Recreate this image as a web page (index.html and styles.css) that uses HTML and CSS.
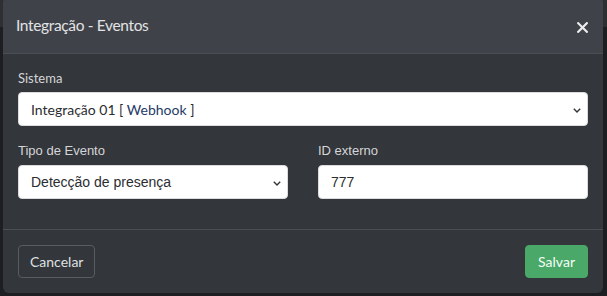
FILE: index.html
```html
<!DOCTYPE html>
<html lang="pt">
<head>
<meta charset="utf-8">
<title>Integração - Eventos</title>
<link rel="stylesheet" href="styles.css">
</head>
<body>
<div class="modal">
  <div class="modal-header">
    <h5 class="modal-title">Integração - Eventos</h5>
    <button class="close" type="button" aria-label="Fechar">
      <svg width="11" height="11" viewBox="0 0 11 11"><path d="M1.2 1.2 L9.8 9.8 M9.8 1.2 L1.2 9.8" stroke="#ececec" stroke-width="2.2" stroke-linecap="square" fill="none"/></svg>
    </button>
  </div>
  <div class="modal-body">
    <div class="form-group">
      <label class="label">Sistema</label>
      <div class="control select nunito">
        <span>Integração 01 [ <span class="tag">Webhook</span> ]</span>
        <svg class="chev" width="8" height="5" viewBox="0 0 8 5"><path d="M0.8 0.8 L4 4 L7.2 0.8" stroke="#333" stroke-width="1.4" fill="none"/></svg>
      </div>
    </div>
    <div class="row">
      <div class="form-group col">
        <label class="label arial">Tipo de Evento</label>
        <div class="control select arial">
          <span>Detecção de presença</span>
          <svg class="chev" width="8" height="5" viewBox="0 0 8 5"><path d="M0.8 0.8 L4 4 L7.2 0.8" stroke="#333" stroke-width="1.4" fill="none"/></svg>
        </div>
      </div>
      <div class="form-group col">
        <label class="label arial">ID externo</label>
        <div class="control arial"><span>777</span></div>
      </div>
    </div>
  </div>
  <div class="modal-footer">
    <button class="btn btn-outline" type="button">Cancelar</button>
    <button class="btn btn-success" type="button">Salvar</button>
  </div>
</div>
</body>
</html>
```
FILE: styles.css
```css
html, body {
  margin: 0;
  padding: 0;
}
body {
  background: linear-gradient(#2d2f33 0 27px, #1d1e21 27px);
  font-family: Lato, "Open Sans", sans-serif;
  height: 296px;
  overflow: hidden;
}
.modal {
  margin: -3px 4px 0 3px;
  width: 600px;
  background: #33363b;
  border-radius: 6px;
  overflow: hidden;
}
.modal-header {
  background: #3f4248;
  display: flex;
  align-items: center;
  justify-content: space-between;
  padding: 16px 16px 16px 13px;
  border-bottom: 1px solid #4b4e54;
}
.modal-title {
  margin: 0;
  font-size: 15.5px;
  letter-spacing: -0.35px;
  font-weight: 400;
  line-height: 24px;
  color: #e2e3e5;
}
.close {
  background: none;
  border: 0;
  padding: 0;
  margin-right: -1px;
  display: flex;
  margin-top: 5px;
}
.modal-body {
  padding: 15px 15px 14px;
}
.form-group {
  margin-bottom: 16px;
  display: flex;
  flex-direction: column;
}
.label {
  font-size: 13px;
  line-height: 18px;
  color: #d4d5d7;
  margin-bottom: 5px;
}
.arial {
  font-family: "Liberation Sans", Arial, sans-serif;
}
.nunito {
  font-family: Lato, sans-serif;
}
.row {
  display: flex;
  gap: 30px;
}
.col {
  flex: 1;
}
.control {
  height: 34px;
  box-sizing: border-box;
  background: #fff;
  border: 1px solid #dcdcdc;
  border-radius: 4px;
  padding: 0 6px 0 12px;
  display: flex;
  align-items: center;
  justify-content: space-between;
  font-size: 14px;
  color: #2b2d30;
}
.tag {
  color: #253a66;
}
.chev {
  margin-top: 2px;
}
.modal-footer {
  border-top: 1px solid #4b4e54;
  padding: 15px;
  display: flex;
  justify-content: space-between;
  align-items: center;
}
.btn {
  height: 33px;
  border-radius: 4px;
  font-family: Lato, sans-serif;
  font-size: 14px;
  padding: 0 12px;
  cursor: pointer;
}
.btn-outline {
  background: transparent;
  border: 1px solid #595c61;
  color: #dfe0e2;
  padding: 0 11px;
}
.btn-success {
  background: #4aa869;
  border: 1px solid #4aa869;
  color: #f4fff7;
}
```
